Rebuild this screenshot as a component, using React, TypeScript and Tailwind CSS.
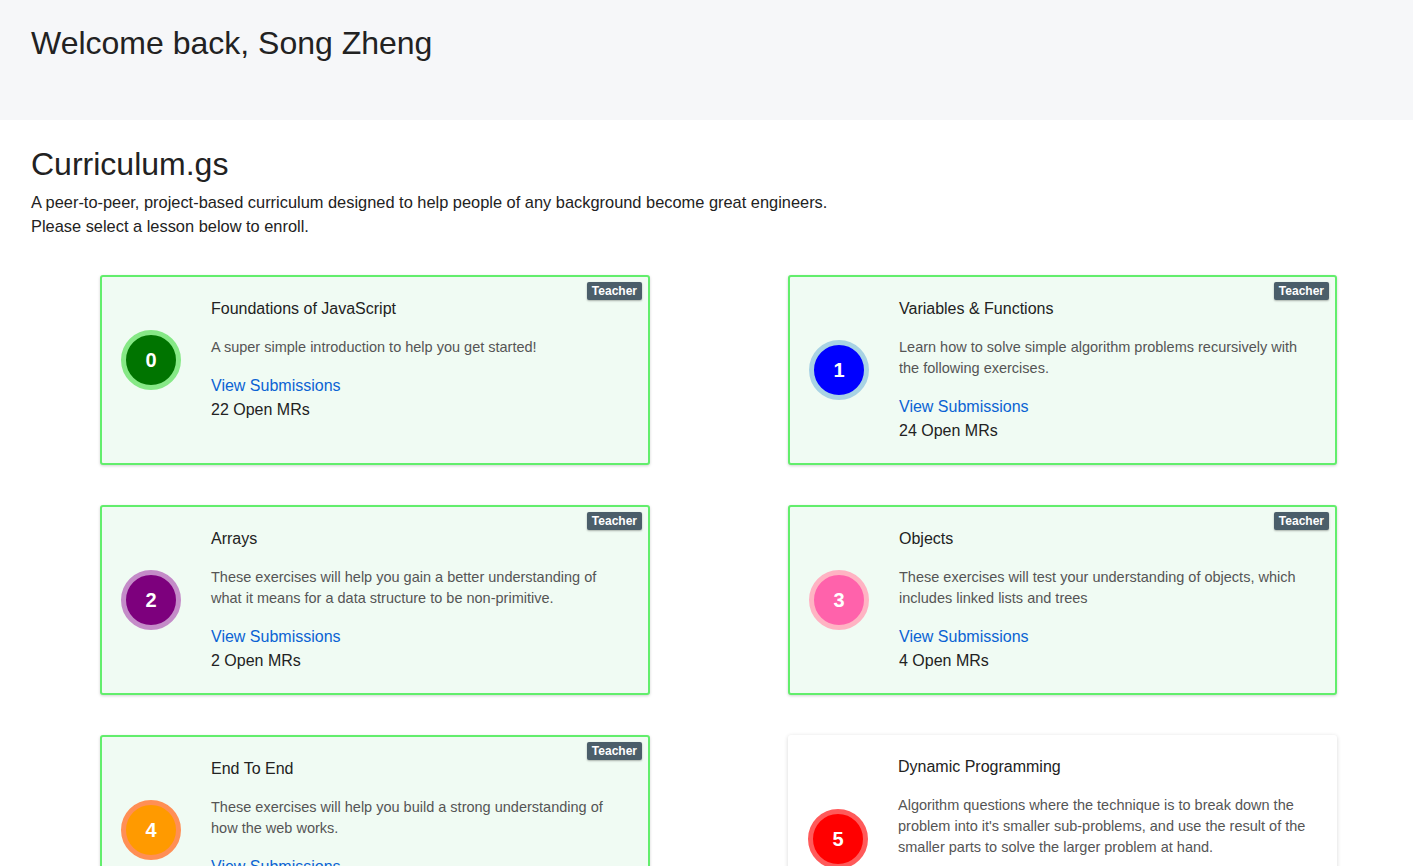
const lessons = [
  {
    n: 0,
    title: "Foundations of JavaScript",
    desc: "A super simple introduction to help you get started!",
    mrs: 22,
    fill: "bg-[#007400]",
    ring: "border-[#86e886]",
    teacher: true,
  },
  {
    n: 1,
    title: "Variables & Functions",
    desc: "Learn how to solve simple algorithm problems recursively with the following exercises.",
    mrs: 24,
    fill: "bg-[#0000ff]",
    ring: "border-[#a8d2e4]",
    teacher: true,
  },
  {
    n: 2,
    title: "Arrays",
    desc: "These exercises will help you gain a better understanding of what it means for a data structure to be non-primitive.",
    mrs: 2,
    fill: "bg-[#7d007d]",
    ring: "border-[#c48bc8]",
    teacher: true,
  },
  {
    n: 3,
    title: "Objects",
    desc: "These exercises will test your understanding of objects, which includes linked lists and trees",
    mrs: 4,
    fill: "bg-[#ff62ab]",
    ring: "border-[#ffb3c3]",
    teacher: true,
  },
  {
    n: 4,
    title: "End To End",
    desc: "These exercises will help you build a strong understanding of how the web works.",
    mrs: 6,
    fill: "bg-[#ff9a00]",
    ring: "border-[#ff8f55]",
    teacher: true,
  },
  {
    n: 5,
    title: "Dynamic Programming",
    desc: "Algorithm questions where the technique is to break down the problem into it's smaller sub-problems, and use the result of the smaller parts to solve the larger problem at hand.",
    mrs: 3,
    fill: "bg-[#ff0000]",
    ring: "border-[#ff5a5a]",
    teacher: false,
  },
]

type Lesson = (typeof lessons)[number]

function LessonCard({ lesson }: { lesson: Lesson }) {
  const enrolled = lesson.teacher
  return (
    <div
      className={
        enrolled
          ? "relative rounded-[3px] border-2 border-[#62ee6c] bg-[#f0fbf3] pt-[20px] pb-[20px] pl-[19px] shadow-[0_1px_3px_rgba(0,0,0,0.18)]"
          : "relative rounded-[3px] bg-white pt-[20px] pb-[20px] pl-[20px] shadow-[0_1px_4px_rgba(0,0,0,0.16)]"
      }
    >
      {lesson.teacher && (
        <span className="absolute top-[5px] right-[6px] rounded-[2px] bg-[#4b5e6a] px-[5px] text-[12px] leading-[18px] font-bold text-white shadow-[0_1px_2px_rgba(0,0,0,0.3)]">
          Teacher
        </span>
      )}
      <div className="flex items-center">
        <div
          className={`flex h-[60px] w-[60px] shrink-0 items-center justify-center rounded-full border-[5px] ${lesson.ring} ${lesson.fill} text-[20px] font-semibold text-white`}
        >
          {lesson.n}
        </div>
        <div className="ml-[30px] w-[410px]">
          <div className="text-[16px] leading-[24px] text-[#222]">{lesson.title}</div>
          <p className="mt-[16px] text-[14.5px] leading-[21px] text-[#555]">{lesson.desc}</p>
          <a className="mt-[16px] block text-[16px] leading-[24px] text-[#0b63d3]">View Submissions</a>
          <div className="text-[16px] leading-[24px] text-[#222]">{lesson.mrs} Open MRs</div>
        </div>
      </div>
    </div>
  )
}

export default function App() {
  return (
    <div className="min-h-screen bg-white font-['Liberation_Sans',Arial,sans-serif] text-[#222]">
      <header className="h-[120px] bg-[#f6f7f9] px-[31px] pt-[24px]">
        <h1 className="text-[32px] leading-[38px] font-light">Welcome back, Song Zheng</h1>
      </header>

      <section className="px-[31px] pt-[25px]">
        <h2 className="text-[32px] leading-[38px] font-light">Curriculum.gs</h2>
        <p className="mt-[7px] text-[16.4px] leading-[24px]">
          A peer-to-peer, project-based curriculum designed to help people of any background become great engineers.
          <br />
          Please select a lesson below to enroll.
        </p>
      </section>

      <div className="grid grid-cols-[550px_549px] gap-x-[138px] gap-y-[40px] pt-[37px] pb-[40px] pl-[100px]">
        {lessons.map((l) => (
          <LessonCard key={l.n} lesson={l} />
        ))}
      </div>
    </div>
  )
}
